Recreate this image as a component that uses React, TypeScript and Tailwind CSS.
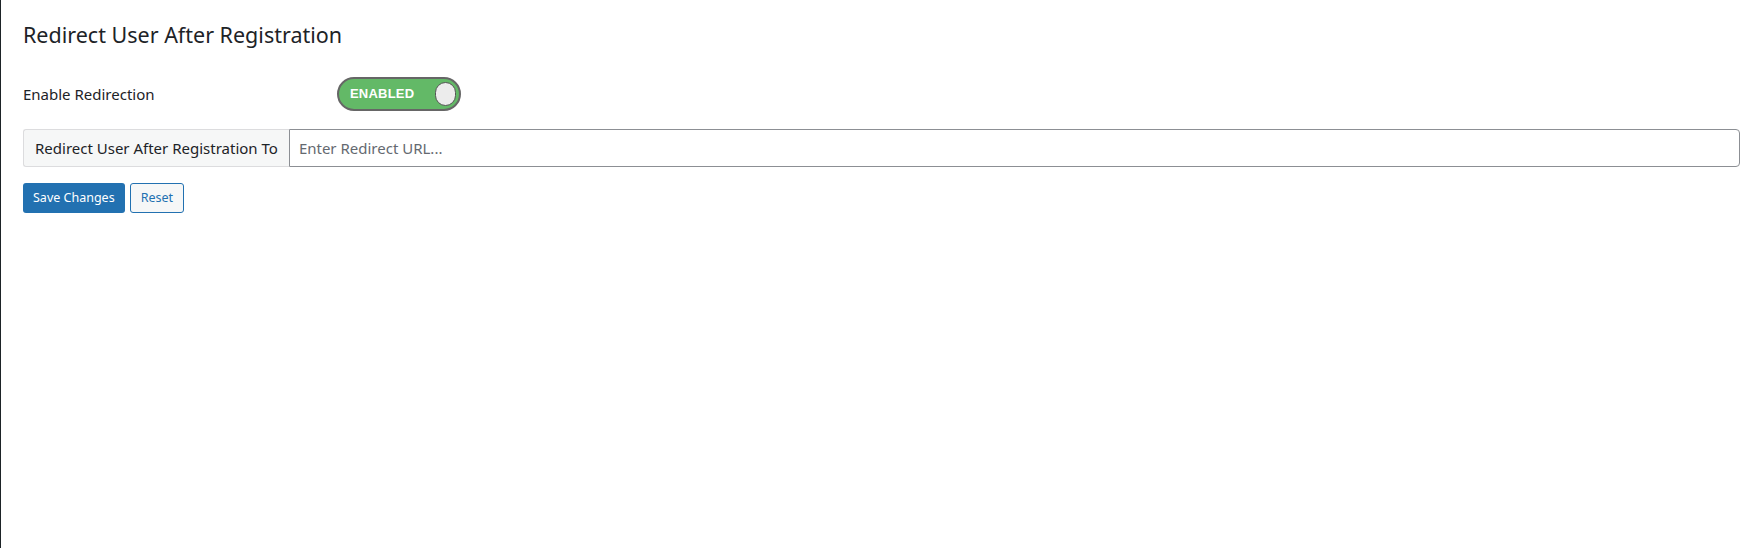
import { useState } from 'react';

const font = { fontFamily: '"Noto Sans", "Open Sans", sans-serif' };

function Toggle({ on, onChange }: { on: boolean; onChange: (v: boolean) => void }) {
  return (
    <button
      type="button"
      onClick={() => onChange(!on)}
      className="flex h-[34px] w-[124px] items-center justify-between rounded-full border-2 border-[#666] bg-[#63b967] pl-[11px] pr-[3px]"
    >
      <span className="text-[13px] font-bold tracking-[0.2px] text-white" style={{ fontFamily: '"Liberation Sans", Arial, sans-serif' }}>
        {on ? 'ENABLED' : 'DISABLED'}
      </span>
      <span className="h-[24px] w-[21px] rounded-full border-[1.5px] border-[#555] bg-[#ececec]" />
    </button>
  );
}

export default function App() {
  const [enabled, setEnabled] = useState(true);
  const [url, setUrl] = useState('');

  return (
    <div className="h-[548px] w-full border-l border-[#1d2327] bg-white pl-[22px] pr-[20px] pt-[20px] text-[#1d2327]" style={font}>
      <h1 className="text-[21.5px] font-normal leading-[30px]">Redirect User After Registration</h1>

      <div className="mt-[27px] flex items-center">
        <label className="w-[314px] text-[15px]">Enable Redirection</label>
        <Toggle on={enabled} onChange={setEnabled} />
      </div>

      <div className="mt-[18px] flex h-[38px] w-full">
        <span className="flex items-center rounded-l-[3px] border border-r-0 border-[#dcdcde] bg-[#f6f7f7] px-[11px] text-[15px]">
          Redirect User After Registration To
        </span>
        <input
          value={url}
          onChange={(e) => setUrl(e.target.value)}
          placeholder="Enter Redirect URL..."
          className="flex-1 rounded-r-[4px] border border-[#8c8f94] px-[9px] text-[15px] text-[#2c3338] placeholder:text-[#646970] outline-none"
        />
      </div>

      <div className="mt-[16px] flex gap-[5px]">
        <button className="h-[30px] rounded-[3px] bg-[#2271b1] px-[10px] text-[12.5px] text-white">Save Changes</button>
        <button className="h-[30px] rounded-[3px] border border-[#2271b1] bg-[#f6f7f7] px-[10px] text-[12.5px] text-[#2271b1]">
          Reset
        </button>
      </div>
    </div>
  );
}
